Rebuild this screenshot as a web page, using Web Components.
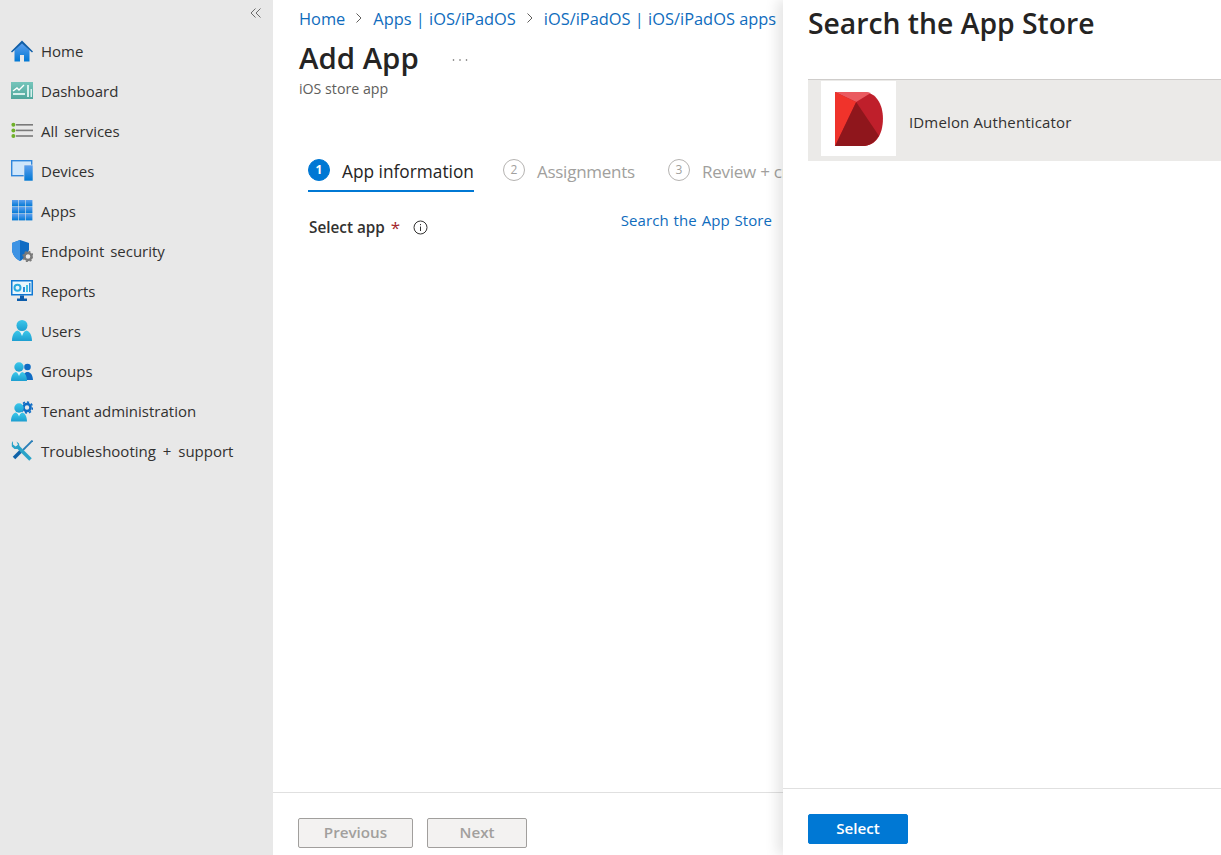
<!DOCTYPE html>
<html lang="en">
<head>
<meta charset="UTF-8">
<title>Add App</title>
<style>
  html, body { margin: 0; height: 100%; overflow: hidden; }
  body { font-family: "Open Sans", "Noto Sans", sans-serif; color: #323130; }
</style>
</head>
<body>

<template id="app-shell-template">
  <style>
    :host { display: grid; grid-template-columns: 273px 510px 438px; height: 855px; background: #fff; }
  </style>
  <slot></slot>
</template>

<template id="side-nav-template">
  <style>
    :host { display: block; background: #e8e8e8; height: 855px; }
    .top { height: 31px; display: flex; justify-content: flex-end; padding: 0 11px 0 0; align-items: center; }
    .top svg { display: block; margin-top: -5px; }
    .items { display: flex; flex-direction: column; }
  </style>
  <div class="top">
    <svg width="12" height="12" viewBox="0 0 12 12" fill="none" stroke="#6b6b6b" stroke-width="1"><path d="M5.5 1.5 1 6l4.5 4.5M10.5 1.5 6 6l4.5 4.5"/></svg>
  </div>
  <div class="items"><slot></slot></div>
</template>

<template id="nav-item-template">
  <style>
    :host { display: flex; align-items: center; height: 40px; padding-left: 11px; font-size: 15px; color: #323130; word-spacing: 2px; }
    .ico { width: 22px; height: 22px; margin-right: 8px; flex: none; display: block; }
    ::slotted(svg) { display: block; width: 22px; height: 22px; }
    .lab { margin-top: -1px; }
  </style>
  <span class="ico"><slot name="icon"></slot></span>
  <span class="lab"><slot></slot></span>
</template>

<template id="bread-crumbs-template">
  <style>
    :host { display: flex; align-items: center; height: 36px; padding-left: 1px; font-size: 16.4px; color: #0f6cbd; white-space: nowrap; }
    svg { margin: 0 10px 0 10px; flex: none; }
  </style>
  <span>Home</span>
  <svg width="8" height="12" viewBox="0 0 8 12" fill="none" stroke="#605e5c"><path d="M1.5 1.5 6 6l-4.5 4.5"/></svg>
  <span>Apps | iOS/iPadOS</span>
  <svg width="8" height="12" viewBox="0 0 8 12" fill="none" stroke="#605e5c"><path d="M1.5 1.5 6 6l-4.5 4.5"/></svg>
  <span>iOS/iPadOS | iOS/iPadOS apps</span>
</template>

<template id="page-title-template">
  <style>
    :host { display: block; padding-left: 1px; }
    .row { display: flex; align-items: center; height: 44px; }
    h1 { margin: 0; font-size: 29.4px; font-weight: 600; color: #252423; line-height: 44px; }
    svg { margin: 3px 0 0 33px; display: block; }
    p { margin: 0; font-size: 14.2px; color: #605e5c; line-height: 18px; }
  </style>
  <div class="row"><h1><slot></slot></h1>
    <svg width="16" height="4" viewBox="0 0 16 4" fill="#605e5c"><circle cx="1.5" cy="2" r=".8"/><circle cx="8" cy="2" r=".8"/><circle cx="14.500" cy="2" r=".8"/></svg>
  </div>
  <p><slot name="sub"></slot></p>
</template>

<template id="wizard-tabs-template">
  <style>
    :host { display: flex; gap: 29px; height: 44px; margin-top: 50px; margin-left: 10px; white-space: nowrap; }
  </style>
  <slot></slot>
</template>

<template id="wizard-tab-template">
  <style>
    :host { display: flex; align-items: flex-start; gap: 12px; height: 44px; box-sizing: border-box; padding-top: 13px; font-size: 17px; color: #a19f9d; letter-spacing: -0.25px; }
    :host([active]) { color: #252423; border-bottom: 2px solid #0078d4; font-weight: 500; font-size: 17.3px; letter-spacing: 0; }
    .num { width: 22px; height: 22px; margin-top: -2px; box-sizing: border-box; border: 1px solid #b5b3b1; border-radius: 50%; font-size: 12px; display: flex; align-items: center; justify-content: center; letter-spacing: 0; padding-bottom: 2px; }
    :host([active]) .num { background: #0078d4; border-color: #0078d4; color: #fff; font-weight: 700; padding-bottom: 1px; }
    .txt { line-height: 22px; }
  </style>
  <span class="num"></span><span class="txt"><slot></slot></span>
</template>

<template id="select-app-template">
  <style>
    :host { display: flex; justify-content: space-between; align-items: flex-start; padding: 17px 11px 0 36px; font-size: 15.3px; }
    .lab { display: flex; align-items: center; font-weight: 600; color: #323130; height: 22px; margin-top: 7px; }
    .req { color: #a4262c; margin-left: 6px; font-size: 17px; font-weight: 400; }
    svg { margin-left: 13px; }
    a { color: #0f6cbd; text-decoration: none; line-height: 22px; font-size: 15px; letter-spacing: .05px; word-spacing: 1px; }
  </style>
  <span class="lab">Select app<span class="req">*</span>
    <svg width="15" height="15" viewBox="0 0 15 15" fill="none" stroke="#323130"><circle cx="7.5" cy="7.5" r="6.5"/><path d="M7.5 6.5v4.5"/><path d="M7.5 4v1.2"/></svg>
  </span>
  <a>Search the App Store</a>
</template>

<template id="main-blade-template">
  <style>
    :host { display: flex; flex-direction: column; height: 855px; overflow: hidden; }
    .head { padding-left: 25px; }
    .body { flex: 1; }
    .foot { height: 63px; box-sizing: border-box; border-top: 1px solid #e0e0e0; display: flex; gap: 14px; padding: 25px 0 0 25px; }
  </style>
  <div class="head"><slot name="head"></slot></div>
  <div class="body"><slot name="body"></slot></div>
  <div class="foot"><slot name="foot"></slot></div>
</template>

<template id="fx-button-template">
  <style>
    :host { display: flex; align-items: center; justify-content: center; box-sizing: border-box; height: 30px; padding-bottom: 2px; border-radius: 2px; font-size: 15.2px; font-weight: 600; background: #f3f2f1; color: #a19f9d; border: 1px solid #a19f9d; }
    :host([primary]) { background: #0078d4; color: #fff; border-color: #0078d4; }
  </style>
  <slot></slot>
</template>

<template id="store-panel-template">
  <style>
    :host { display: flex; flex-direction: column; height: 855px; background: #fff; position: relative; box-shadow: -6px 0 12px rgba(0,0,0,.10); }
    h2 { margin: 0; font-size: 28.3px; font-weight: 600; color: #252423; line-height: 46px; height: 79px; padding-left: 25px; }
    .list { flex: 1; padding-left: 25px; }
    .foot { height: 67px; box-sizing: border-box; border-top: 1px solid #e0e0e0; padding: 25px 0 0 25px; }
  </style>
  <h2><slot name="title"></slot></h2>
  <div class="list"><slot></slot></div>
  <div class="foot"><slot name="foot"></slot></div>
</template>

<template id="store-row-template">
  <style>
    :host { display: flex; align-items: flex-start; height: 82px; box-sizing: border-box; border-top: 1px solid #cfcdcb; background: #ebeae8; padding: 1px 0 0 13px; font-size: 15px; color: #323130; letter-spacing: .15px; }
    .img { width: 75px; height: 75px; background: #fff; flex: none; display: flex; align-items: center; justify-content: center; }
    .name { margin: 31px 0 0 13px; line-height: 20px; }
  </style>
  <span class="img"><slot name="img"></slot></span>
  <span class="name"><slot></slot></span>
</template>

<svg width="0" height="0" style="position:absolute">
  <defs>
    <linearGradient id="gBlue" x1="0" y1="0" x2="0" y2="1"><stop offset="0" stop-color="#5ea0ef"/><stop offset="1" stop-color="#0078d4"/></linearGradient>
    <linearGradient id="gCyan" x1="0" y1="0" x2="0" y2="1"><stop offset="0" stop-color="#3cc8ea"/><stop offset="1" stop-color="#1c9ed0"/></linearGradient>
    <linearGradient id="gTeal" x1="0" y1="0" x2="0" y2="1"><stop offset="0" stop-color="#76c5bb"/><stop offset="1" stop-color="#4fa79c"/></linearGradient>
  </defs>
</svg>

<app-shell>
  <side-nav>
    <nav-item>
      <svg slot="icon" viewBox="0 0 22 22"><path d="M3.500 10 11 3l7.500 7v11.500H13V15H9v6.500H3.500z" fill="url(#gBlue)"/><path d="M0 11.500 11 .5l11 11-1 1L11 3.500 1 12.500z" fill="#0f5ea8"/></svg>Home</nav-item>
    <nav-item>
      <svg slot="icon" viewBox="0 0 22 22"><rect y="2" width="22" height="17" fill="url(#gTeal)"/><path d="M2 11 6 8l2 2 5-5" fill="none" stroke="#fff" stroke-width="1.4"/><rect x="2" y="13" width="12" height="2" fill="#d6f0ec"/><rect x="16" y="5" width="2" height="12" fill="#d6f0ec"/><rect x="19.5" y="9" width="1.500" height="8" fill="#d6f0ec"/></svg>Dashboard</nav-item>
    <nav-item>
      <svg slot="icon" viewBox="0 0 22 22"><g fill="#7a7a7a"><rect x="5" y="4" width="17" height="1.6"/><rect x="5" y="9.6" width="17" height="1.6"/><rect x="5" y="15.2" width="17" height="1.6"/></g><g fill="#6fb02a"><circle cx="2.4" cy="4.8" r="2"/><circle cx="2.4" cy="10.4" r="2"/><circle cx="2.4" cy="16" r="2"/></g></svg>All services</nav-item>
    <nav-item>
      <svg slot="icon" viewBox="0 0 22 22"><rect x=".7" y=".7" width="20" height="15" fill="#cfe6fb" stroke="#2f86dc" stroke-width="1.4"/><rect x="13" y="5" width="9" height="16" fill="url(#gBlue)" stroke="#e8e8e8" stroke-width=".6"/></svg>Devices</nav-item>
    <nav-item>
      <svg slot="icon" viewBox="0 0 22 22"><g fill="url(#gBlue)"><rect x="1" y="0" width="6.400" height="6.400"/><rect x="8" y="0" width="6.400" height="6.400"/><rect x="15" y="0" width="6.400" height="6.400"/><rect x="1" y="7" width="6.400" height="6.400"/><rect x="8" y="7" width="6.400" height="6.400"/><rect x="15" y="7" width="6.400" height="6.400"/><rect x="1" y="14" width="6.400" height="6.400"/><rect x="8" y="14" width="6.400" height="6.400"/><rect x="15" y="14" width="6.400" height="6.400"/></g></svg>Apps</nav-item>
    <nav-item>
      <svg slot="icon" viewBox="0 0 22 22"><path d="M9 0 1 3v6c0 6 4 10 8 12 2-1 4-2.500 5.500-5L18 10V3z" fill="#0f6cc4"/><path d="M9 0v21c-4-2-8-6-8-12V3z" fill="#3d93e4"/><circle cx="17" cy="16.500" r="3.500" fill="none" stroke="#7a7a7a" stroke-width="2.400"/><circle cx="17" cy="16.500" r="5" fill="none" stroke="#7a7a7a" stroke-width="1.300" stroke-dasharray="2 1.900"/></svg>Endpoint security</nav-item>
    <nav-item>
      <svg slot="icon" viewBox="0 0 22 22"><rect x="0" y="0" width="22" height="15.500" fill="#0f78d4"/><rect x="1.500" y="1.500" width="19" height="12.500" fill="#e8f6fc"/><circle cx="6.500" cy="7.800" r="3" fill="none" stroke="#29a9de" stroke-width="2"/><rect x="12" y="7" width="2" height="5" fill="#2b8cd8"/><rect x="15" y="5" width="2" height="7" fill="#3cc0e0"/><rect x="18" y="3" width="1.500" height="9" fill="#2b8cd8"/><path d="M9 15.500h4v3h3V21H6v-2.500h3z" fill="#0b5cab"/></svg>Reports</nav-item>
    <nav-item>
      <svg slot="icon" viewBox="0 0 22 22"><circle cx="11" cy="5.500" r="5.500" fill="url(#gCyan)"/><path d="M1 21c0-7 3-10 6-10.500l4 3 4-3c3 .5 6 3.500 6 10.500z" fill="url(#gCyan)"/><path d="M9 11.500h4L11 16z" fill="#e6f7fc"/></svg>Users</nav-item>
    <nav-item>
      <svg slot="icon" viewBox="0 0 22 22"><circle cx="16.500" cy="7" r="3.300" fill="#0f6cc4"/><path d="M11 20c1-6 3-8 5.500-8s5 2 5.500 8z" fill="#0f6cc4"/><circle cx="8" cy="7" r="4.700" fill="url(#gCyan)"/><path d="M0 21c0-6 2.500-8.500 5-9l3 2.500 3-2.500c2.500.5 5 3 5 9z" fill="url(#gCyan)"/><path d="M6.500 12.500h3L8 16z" fill="#e6f7fc"/></svg>Groups</nav-item>
    <nav-item style="word-spacing:0">
      <svg slot="icon" viewBox="0 0 22 22"><circle cx="16" cy="7.500" r="3.500" fill="none" stroke="#0f6cc4" stroke-width="2.600"/><circle cx="16" cy="7.500" r="5.500" fill="none" stroke="#0f6cc4" stroke-width="1.600" stroke-dasharray="2.200 2"/><circle cx="8" cy="8" r="4.700" fill="url(#gCyan)"/><path d="M0 21.500c0-6 2.500-8.500 5-9l3 2.500 3-2.500c2.500.5 5 3 5 9z" fill="url(#gCyan)"/><path d="M6.500 13h3L8 16.500z" fill="#e6f7fc"/></svg>Tenant administration</nav-item>
    <nav-item style="word-spacing:3px">
      <svg slot="icon" viewBox="0 0 22 22"><path d="M21.500.5 12 10" fill="none" stroke="#2a7fb8" stroke-width="1.800"/><path d="M10 11 3 18" fill="none" stroke="#0f62a8" stroke-width="3.600"/><path d="M6 6 19.500 19.500" fill="none" stroke="#2aa3c8" stroke-width="3.600"/><path d="M2 1v3.500L4.500 6.500 7 5 5.500 1.500 8 3.500 8.500 7 6.500 9H3.500L.8 6.500V3z" fill="#2aa3c8"/></svg>Troubleshooting + support</nav-item>
  </side-nav>

  <main-blade>
    <bread-crumbs slot="head"></bread-crumbs>
    <page-title slot="head">Add App<span slot="sub">iOS store app</span></page-title>
    <wizard-tabs slot="head">
      <wizard-tab active num="1">App information</wizard-tab>
      <wizard-tab num="2" style="margin-right:4px">Assignments</wizard-tab>
      <wizard-tab num="3">Review + create</wizard-tab>
    </wizard-tabs>
    <select-app slot="body"></select-app>
    <fx-button slot="foot" style="width:115px">Previous</fx-button>
    <fx-button slot="foot" style="width:100px">Next</fx-button>
  </main-blade>

  <store-panel>
    <span slot="title">Search the App Store</span>
    <store-row>
      <svg slot="img" width="48" height="54" viewBox="0 0 47 53">
        <path d="M0 0h28c12 0 19 12 19 26 0 16-7 27-20 27H0z" fill="#bf1f2b"/>
        <path d="M0 0h28c3 0 5 .3 7 1L20.700 9.700z" fill="#ea5a60"/>
        <path d="M0 0l20.700 9.700L0 53z" fill="#f0332b"/>
        <path d="M20.700 9.700 0 53h27c7 0 12-3.500 16-10z" fill="#8f161c"/>
      </svg>
      IDmelon Authenticator
    </store-row>
    <fx-button slot="foot" primary style="width:100px">Select</fx-button>
  </store-panel>
</app-shell>

<script>
  // every element is the same: clone its template into an open shadow root
  function simple(name, setup) {
    customElements.define(name, class extends HTMLElement {
      constructor() {
        super();
        const root = this.attachShadow({ mode: 'open' });
        root.appendChild(document.getElementById(name + '-template').content.cloneNode(true));
      }
      connectedCallback() {
        if (setup) setup(this);
      }
    });
  }
  simple('app-shell');
  simple('side-nav');
  simple('nav-item');
  simple('bread-crumbs');
  simple('page-title');
  simple('wizard-tabs');
  simple('wizard-tab', el => {
    el.shadowRoot.querySelector('.num').textContent = el.getAttribute('num');
  });
  simple('select-app');
  simple('main-blade');
  simple('fx-button');
  simple('store-panel');
  simple('store-row');
</script>
</body>
</html>
